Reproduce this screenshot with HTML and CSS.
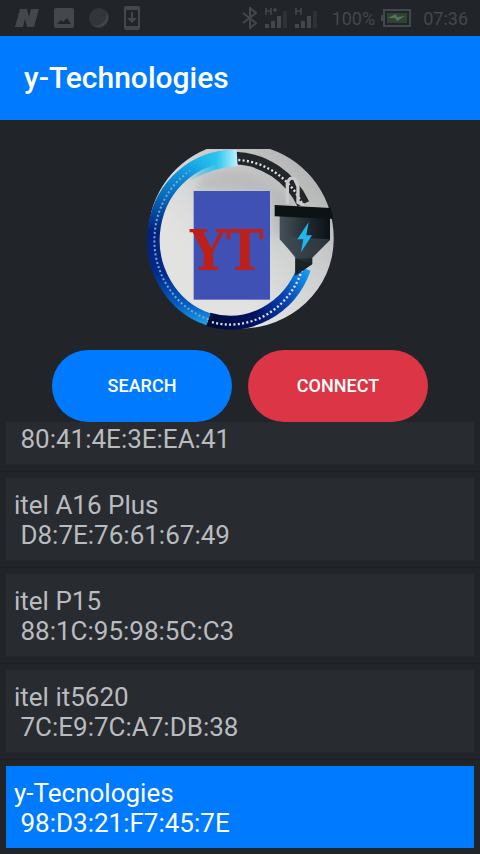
FILE: index.html
```html
<!DOCTYPE html>
<html lang="en">
<head>
<meta charset="utf-8">
<meta name="viewport" content="width=device-width, initial-scale=1">
<title>y-Technologies</title>
<link rel="stylesheet" href="styles.css">
</head>
<body>
<div class="status">
  <div class="status-group status-left">
    <svg width="26" height="22" viewBox="0 0 26 22"><path d="M6 2h7l2 8 2-8h8l-5 18h-7l-2-8-2 8H1z" fill="currentColor"/></svg>
    <svg width="20" height="20" viewBox="0 0 20 20"><path fill="currentColor" fill-rule="evenodd" d="M2 0h16q2 0 2 2v16q0 2-2 2H2q-2 0-2-2V2q0-2 2-2zM3 16h14l-4-6-4 4-2-2z"/></svg>
    <svg width="22" height="22" viewBox="0 0 22 22"><circle cx="11" cy="11" r="10" fill="currentColor" opacity=".5"/><path d="M18 4a10 10 0 0 1-14 14 11 11 0 0 0 14-14z" fill="currentColor"/></svg>
    <svg width="16" height="24" viewBox="0 0 16 24"><path fill="currentColor" fill-rule="evenodd" d="M2 0h12q2 0 2 2v20q0 2-2 2H2q-2 0-2-2V2q0-2 2-2zM2 4v16h12V4z"/><path fill="currentColor" d="M7 6h2v6h4l-5 5-5-5h4z"/></svg>
  </div>
  <div class="status-group status-right">
    <svg width="16" height="22" viewBox="0 0 16 22"><path d="M1 6l13 10-6 5V1l6 5L1 16" fill="none" stroke="currentColor" stroke-width="2"/></svg>
    <svg width="24" height="22" viewBox="0 0 24 22"><path fill="currentColor" d="M1 17h4v4H1zM7 14h4v7H7zM13 9h4v12h-4z"/><path fill="currentColor" opacity=".4" d="M19 4h4v17h-4z"/><path d="M2 1v7M7 1v7M2 4h5M9 3h4M11 1v4" stroke="currentColor" stroke-width="1.5" fill="none"/></svg>
    <svg width="24" height="22" viewBox="0 0 24 22"><path fill="currentColor" d="M1 17h4v4H1zM7 14h4v7H7zM13 9h4v12h-4z"/><path fill="currentColor" opacity=".4" d="M19 4h4v17h-4z"/><path d="M2 1v7M7 1v7M2 4h5" stroke="currentColor" stroke-width="1.5" fill="none"/></svg>
    <span class="percent">100%</span>
    <svg width="30" height="18" viewBox="0 0 30 18"><path d="M3 1h26v16H3z" fill="none" stroke="currentColor" stroke-width="2"/><path d="M0 6h3v6H0z" fill="currentColor"/><path d="M6 4h20v10H6z" fill="#2c4430"/><path d="M7 9l8-4 1 3 8-1-8 5-2-3z" fill="#557458"/></svg>
    <span class="clock">07:36</span>
  </div>
</div>
<header class="appbar"><h1>y-Technologies</h1></header>
<main class="content">
  <svg class="logo" viewBox="0 0 600 600" role="img" aria-label="YT logo">
    <defs>
      <clipPath id="disc"><path d="M200 27H390A281 281 0 0 1 581 300A281 268 0 0 1 300 566A275 266 0 0 1 25 300A281 281 0 0 1 200 27z"/></clipPath>
      <linearGradient id="paper" x1="0" y1="1" x2="1" y2="0"><stop offset=".35" stop-color="#e2e3e1"/><stop offset=".6" stop-color="#cfd0d1"/><stop offset="1" stop-color="#a4a4a4"/></linearGradient>
      <linearGradient id="left" gradientUnits="userSpaceOnUse" x1="0" y1="35" x2="0" y2="555"><stop offset="0" stop-color="#2cc0ee"/><stop offset=".1" stop-color="#129be0"/><stop offset=".27" stop-color="#0865b8"/><stop offset=".46" stop-color="#03217a"/><stop offset=".7" stop-color="#042a8a"/><stop offset=".88" stop-color="#075bc0"/><stop offset="1" stop-color="#1ba2ee"/></linearGradient>
      <linearGradient id="tip"><stop offset="0" stop-color="#1eb4ea" stop-opacity="0"/><stop offset=".6" stop-color="#2cc5ee"/><stop offset="1" stop-color="#c4f1fb"/></linearGradient>
      <linearGradient id="right" gradientUnits="userSpaceOnUse" x1="205" y1="560" x2="510" y2="380"><stop offset="0" stop-color="#010a35"/><stop offset=".4" stop-color="#021467"/><stop offset=".7" stop-color="#0747b8"/><stop offset="1" stop-color="#18a7f4"/></linearGradient>
      <linearGradient id="plug"><stop offset="0" stop-color="#46525a"/><stop offset=".55" stop-color="#202a31"/><stop offset="1" stop-color="#0c1217"/></linearGradient>
      <filter id="soft"><feGaussianBlur stdDeviation="12"/></filter>
    </defs>
    <g clip-path="url(#disc)">
      <rect width="600" height="600" fill="url(#paper)"/>
      <path d="M190 100Q330 60 480 210L400 300 390 155H160z" fill="#aaabad" opacity=".5" filter="url(#soft)"/>
    </g>
    <g fill="none" stroke-width="38">
      <path d="M285 54A237 250 0 0 1 490 192" stroke="#24272a"/>
      <path d="M492 385A237 250 0 0 1 205 538" stroke="url(#right)" stroke-width="42"/>
      <path d="M205 538A237 250 0 0 1 285 50" stroke="url(#left)"/>
    </g>
    <path d="M140 76Q205 28 290 30L293 78Q225 80 152 122z" fill="url(#tip)"/>
    <path d="M295 60A230 243 0 0 1 486 190M486 390A228 243 0 0 1 210 545" fill="none" stroke="#dce5ec" stroke-width="7" stroke-dasharray="6 7"/>
    <path d="M205 538A237 250 0 0 1 150 92" fill="none" stroke="#70a9db" stroke-width="6" stroke-dasharray="6 7"/>
    <path d="M442 192V130q6-22 22-13l10 22v48l18 8" fill="none" stroke="#c9cacb" stroke-width="10"/>
    <rect x="161" y="153" width="229" height="326" fill="#3f51b5"/>
    <text class="logo-text" x="260" y="391" text-anchor="middle">YT</text>
    <path d="M419 228H570V300L517 352V372L466 407V350L419 298z" fill="url(#plug)"/>
    <path d="M419 290L570 298 517 355H466z" fill="#3f4c54" opacity=".6"/>
    <path d="M404 195L572 204 580 237 404 229z" fill="#0d1215"/>
    <path d="M466 355L517 372 466 407z" fill="#1a2127"/>
    <path d="M506 246L472 298H490L483 337 516 286H499z" fill="#20b5ec"/>
  </svg>
  <div class="actions">
    <button type="button" class="btn search">SEARCH</button>
    <button type="button" class="btn connect">CONNECT</button>
  </div>
  <ul class="devices">
    <li><button type="button" class="device"><span>&nbsp;80:41:4E:3E:EA:41</span></button></li>
    <li><button type="button" class="device"><span>itel A16 Plus</span><span>&nbsp;D8:7E:76:61:67:49</span></button></li>
    <li><button type="button" class="device"><span>itel P15</span><span>&nbsp;88:1C:95:98:5C:C3</span></button></li>
    <li><button type="button" class="device"><span>itel it5620</span><span>&nbsp;7C:E9:7C:A7:DB:38</span></button></li>
    <li><button type="button" class="device selected"><span>y-Tecnologies</span><span>&nbsp;98:D3:21:F7:45:7E</span></button></li>
  </ul>
</main>
</body>
</html>
```
FILE: styles.css
```css
* { box-sizing: border-box; }
body {
  margin: 0;
  height: 100vh;
  display: flex;
  flex-direction: column;
  overflow: hidden;
  background: #212429;
  color: #b9bbbe;
  font-family: Roboto, "Liberation Sans", sans-serif;
}
.status {
  display: flex;
  justify-content: space-between;
  align-items: center;
  height: 36px;
  flex: none;
  padding: 0 12px 0 14px;
  color: #44474c;
  font-size: 18px;
}
.status-group { display: flex; align-items: center; }
.status-left { gap: 14px; }
.status-right { gap: 6px; }
.percent { padding-left: 8px; }
.clock { padding-left: 6px; }
.appbar {
  flex: none;
  padding: 24px;
  background: #007bff;
  color: #fff;
}
.appbar h1 {
  margin: 0;
  font-size: 30px;
  line-height: 36px;
  font-weight: 500;
}
.content {
  flex: 1;
  min-height: 0;
  display: flex;
  flex-direction: column;
  align-items: center;
  padding-top: 20px;
}
.logo { flex: none; width: 200px; height: 200px; }
.logo-text {
  font-family: "DejaVu Serif Condensed", "DejaVu Serif", serif;
  font-size: 168px;
  font-weight: 700;
  fill: #bd2019;
}
.actions {
  flex: none;
  display: flex;
  gap: 16px;
  margin-top: 10px;
}
.btn {
  width: 180px;
  height: 72px;
  border: 0;
  border-radius: 36px;
  color: #fff;
  font: 500 18px/24px Roboto, "Liberation Sans", sans-serif;
}
.search { background: #007bff; }
.connect { background: #dc3545; }
.devices {
  flex: 1;
  min-height: 0;
  align-self: stretch;
  display: flex;
  flex-direction: column;
  justify-content: flex-end;
  overflow: hidden;
  margin: 0;
  padding: 0;
  list-style: none;
}
.devices li {
  flex: none;
  padding: 6px;
  border-top: 2px solid #1d2024;
}
.device {
  display: flex;
  flex-direction: column;
  width: 100%;
  padding: 12px 8px 10px;
  border: 0;
  background: #282b30;
  color: inherit;
  font: 400 26px/30px Roboto, "Liberation Sans", sans-serif;
  text-align: left;
}
.selected { background: #007bff; color: #fff; }
```
